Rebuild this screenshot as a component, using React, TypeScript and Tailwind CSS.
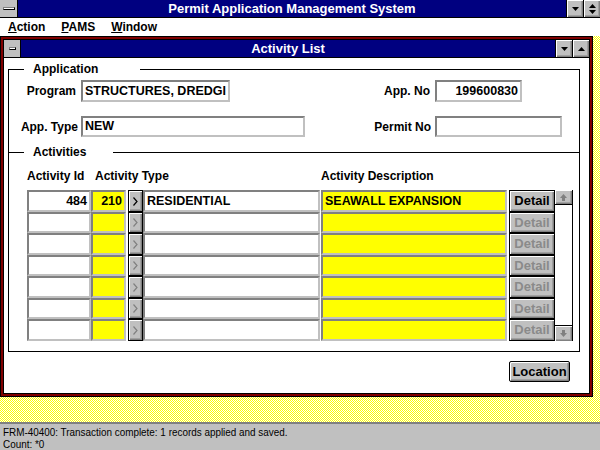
const bevel =
  "bg-[#c0c0c0] shadow-[inset_1px_1px_0_#ffffff,inset_-1px_-1px_0_#808080,inset_-2px_-2px_0_#a0a0a0]";
const sunken =
  "border-2 border-t-[#808080] border-l-[#808080] border-b-[#c0c0c0] border-r-[#c0c0c0]";

// yellow / white dithered desktop pattern, one dashed line per pixel row
const Dither = ({ w, h }: { w: number; h: number }) => (
  <svg width={w} height={h} className="block bg-[#ffff00]" shapeRendering="crispEdges">
    {Array.from({ length: h }, (_, y) => (
      <line
        key={y}
        x1={y % 2}
        y1={y + 0.5}
        x2={w}
        y2={y + 0.5}
        stroke="#ffffff"
        strokeWidth="1"
        strokeDasharray="1 1"
      />
    ))}
  </svg>
);

const Arrow = ({ dir, color = "#000" }: { dir: "up" | "down"; color?: string }) => (
  <svg width="7" height="4" viewBox="0 0 7 4">
    {dir === "down" ? (
      <polygon points="0,0 7,0 3.5,4" fill={color} />
    ) : (
      <polygon points="0,4 7,4 3.5,0" fill={color} />
    )}
  </svg>
);

const CaptionButton = ({ children }: { children: React.ReactNode }) => (
  <div className={`w-[17px] h-full flex flex-col items-center justify-center gap-[2px] border-l border-black ${bevel}`}>
    {children}
  </div>
);

const rows = [
  { id: "484", code: "210", type: "RESIDENTIAL", desc: "SEAWALL EXPANSION", h: 22 },
  { id: "", code: "", type: "", desc: "", h: 21 },
  { id: "", code: "", type: "", desc: "", h: 22 },
  { id: "", code: "", type: "", desc: "", h: 21 },
  { id: "", code: "", type: "", desc: "", h: 22 },
  { id: "", code: "", type: "", desc: "", h: 21 },
  { id: "", code: "", type: "", desc: "", h: 22 },
];

const Field = ({ w, value, right }: { w: string; value: string; right?: boolean }) => (
  <div className={`${w} h-full bg-white ${sunken} px-[2px] flex items-center ${right ? "justify-end" : ""} font-bold text-[12.5px] whitespace-nowrap overflow-hidden`}>
    {value}
  </div>
);

export default function App() {
  return (
    <div className="w-[600px] h-[450px] flex flex-col overflow-hidden bg-white font-['Liberation_Sans',Arial,sans-serif] text-black select-none">
      {/* application title bar */}
      <div className="h-[18px] shrink-0 bg-[#000080] flex items-stretch border-b border-black">
        <div className="w-[18px] bg-[#c0c0c0] border-r border-black flex items-center justify-center">
          <div className="w-[12px] h-[3px] bg-white border border-black border-t-[#808080] border-l-[#808080]" />
        </div>
        <div className="flex-1 flex items-center justify-center text-white font-bold text-[13px] leading-none">
          Permit Application Management System
        </div>
        <CaptionButton>
          <Arrow dir="down" />
        </CaptionButton>
        <CaptionButton>
          <Arrow dir="up" />
          <Arrow dir="down" />
        </CaptionButton>
      </div>

      {/* menu */}
      <div className="h-[18px] shrink-0 flex items-center gap-[16px] pl-[8px] text-[12px] font-bold">
        <span><u>A</u>ction</span>
        <span><u>P</u>AMS</span>
        <span><u>W</u>indow</span>
      </div>

      {/* mdi workspace */}
      <div className="h-[361px] shrink-0 flex">
        <div className="w-[593px] h-[361px] shrink-0 border border-black bg-[#800000] p-[2px]">
          <div className="h-full border border-black flex flex-col bg-white">
            {/* window caption */}
            <div className="h-[18px] shrink-0 bg-[#000080] flex items-stretch border-b border-black">
              <div className="w-[17px] bg-[#c0c0c0] border-r border-black flex items-center justify-center">
                <div className="w-[7px] h-[3px] bg-white border border-black border-t-[#808080] border-l-[#808080]" />
              </div>
              <div className="flex-1 flex items-center justify-center text-white font-bold text-[13px] leading-none">
                Activity List
              </div>
              <CaptionButton>
                <Arrow dir="down" />
              </CaptionButton>
              <CaptionButton>
                <Arrow dir="up" />
              </CaptionButton>
            </div>

            {/* content */}
            <div className="flex-1 min-h-0 overflow-hidden pt-[11px] text-[12px]">
              {/* Application group */}
              <div className="relative ml-[4px] w-[572px] h-[83px] border-l border-r border-t border-black">
                <span className="absolute left-[15px] top-[-8px] bg-white pl-[9px] pr-[42px] font-bold leading-[14px]">
                  Application
                </span>
                <div className="mt-[10px] h-[22px] flex items-center">
                  <div className="w-[72px] pr-[5px] text-right font-bold">Program</div>
                  <Field w="w-[149px]" value="STRUCTURES, DREDGI" />
                  <div className="w-[205px] pr-[5px] text-right font-bold">App. No</div>
                  <Field w="w-[87px]" value="199600830" right />
                </div>
                <div className="mt-[14px] h-[21px] flex items-center">
                  <div className="w-[72px] pr-[3px] text-right font-bold">App. Type</div>
                  <Field w="w-[224px]" value="NEW" />
                  <div className="w-[130px] pr-[4px] text-right font-bold">Permit No</div>
                  <Field w="w-[127px]" value="" />
                </div>
              </div>

              {/* Activities group */}
              <div className="relative ml-[4px] w-[572px] h-[200px] border border-black pl-[18px]">
                <span className="absolute left-[15px] top-[-8px] bg-white pl-[9px] pr-[27px] font-bold leading-[14px]">
                  Activities
                </span>
                <div className="mt-[16px] h-[14px] flex font-bold leading-[14px]">
                  <div className="w-[68px]">Activity Id</div>
                  <div className="w-[226px]">Activity Type</div>
                  <div>Activity Description</div>
                </div>
                <div className="mt-[7px] flex">
                  <div className="flex flex-col">
                    {rows.map((r, i) => (
                      <div key={i} className="flex" style={{ height: r.h }}>
                        <Field w="w-[64px]" value={r.id} right />
                        <div className={`w-[35px] h-full bg-[#ffff00] ${sunken} px-[2px] flex items-center justify-end font-bold text-[12.5px]`}>
                          {r.code}
                        </div>
                        <div className="w-[2px]" />
                        <div className={`w-[15px] h-full border border-black ${bevel} flex items-center justify-center`}>
                          <svg width="5" height="9" viewBox="0 0 5 9">
                            <polyline
                              points="0.5,0.5 4,4.5 0.5,8.5"
                              fill="none"
                              stroke={i === 0 ? "#000" : "#808080"}
                              strokeWidth="1.2"
                            />
                          </svg>
                        </div>
                        <Field w="w-[177px]" value={r.type} />
                        <div className="w-[1px]" />
                        <div className={`w-[186px] h-full bg-[#ffff00] ${sunken} px-[2px] flex items-center font-bold text-[12.5px]`}>
                          {r.desc}
                        </div>
                        <div className="w-[2px]" />
                        <div
                          className={`w-[46px] h-full border border-black ${bevel} flex items-center justify-center font-bold text-[13px] ${i === 0 ? "text-black" : "text-[#8a8a8a]"}`}
                        >
                          Detail
                        </div>
                      </div>
                    ))}
                  </div>
                  {/* scrollbar */}
                  <div className="w-[18px] h-[151px] bg-white border-r border-black flex flex-col justify-between">
                    <div className={`h-[15px] ${bevel} border-b border-black flex items-center justify-center`}>
                      <svg width="7" height="7" viewBox="0 0 7 7">
                        <polygon points="0,4 7,4 3.5,0" fill="#808080" />
                        <rect x="2" y="4" width="3" height="3" fill="#808080" />
                      </svg>
                    </div>
                    <div className={`h-[16px] ${bevel} border-t border-black flex items-center justify-center`}>
                      <svg width="7" height="7" viewBox="0 0 7 7">
                        <rect x="2" y="0" width="3" height="3" fill="#808080" />
                        <polygon points="0,3 7,3 3.5,7" fill="#808080" />
                      </svg>
                    </div>
                  </div>
                </div>
              </div>

              <div className="ml-[4px] w-[572px] mt-[9px] flex justify-end pr-[10px]">
                <div className={`w-[61px] h-[21px] border border-black rounded-[2px] ${bevel} flex items-center justify-center font-bold text-[13px]`}>
                  Location
                </div>
              </div>
            </div>
          </div>
        </div>
        <div className="w-[7px] h-[361px] shrink-0 bg-[#ffff00]">
          <Dither w={7} h={361} />
        </div>
      </div>
      <div className="w-[600px] h-[25px] shrink-0 bg-[#ffff00]">
        <Dither w={600} h={25} />
      </div>

      {/* status bar */}
      <div className="h-[28px] shrink-0 bg-[#c0c0c0] border-t-2 border-[#808080] pl-[3px] pt-[2px] text-[11px] leading-[12px]">
        <div className="origin-left scale-x-90 whitespace-nowrap">
          FRM-40400: Transaction complete: 1 records applied and saved.
        </div>
        <div className="origin-left scale-x-90 whitespace-nowrap">Count: *0</div>
      </div>
    </div>
  );
}
